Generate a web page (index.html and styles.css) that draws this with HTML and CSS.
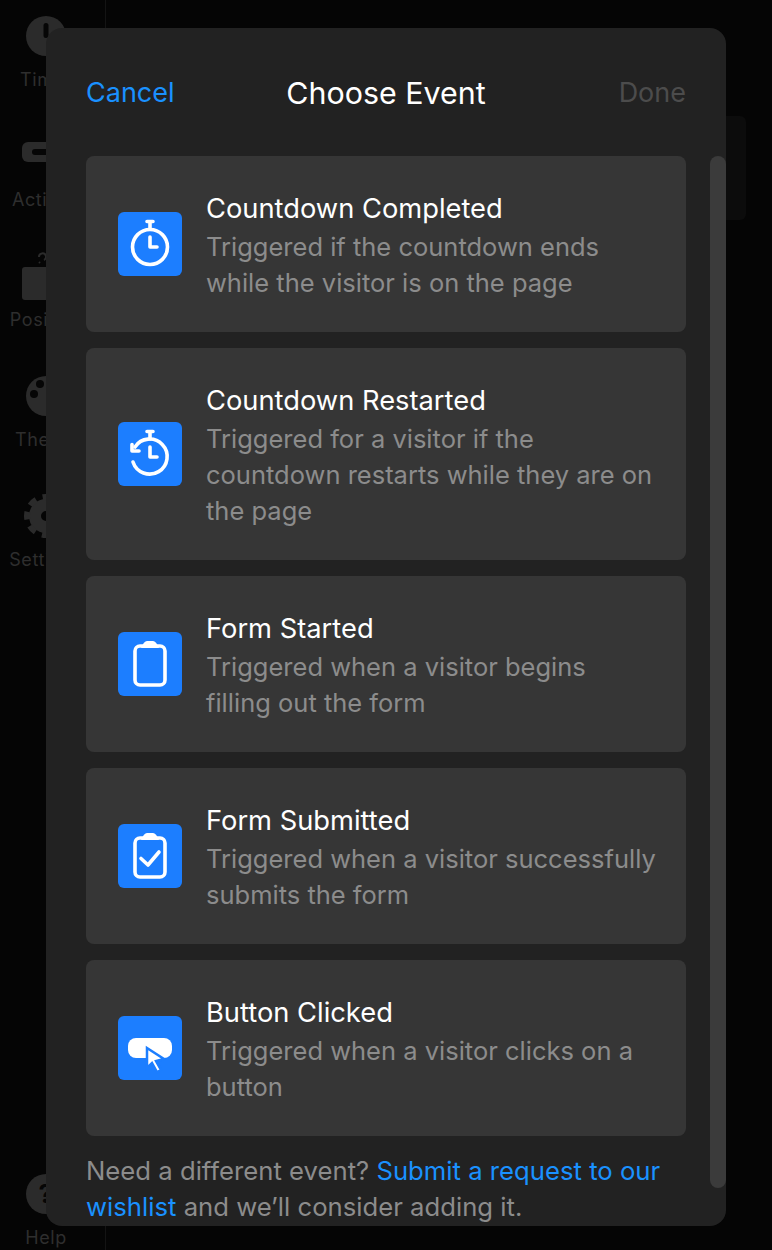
FILE: index.html
```html
<!DOCTYPE html>
<html lang="en">
<head>
  <meta charset="UTF-8" />
  <title>Choose Event</title>
  <link rel="stylesheet" href="styles.css">
</head>
<body>
  <!-- dimmed editor behind the modal -->
  <div class="editor">
    <nav class="sidebar">
      <div class="side-item">
        <svg class="side-icon" viewBox="0 0 40 40"><circle cx="20" cy="20" r="20" fill="#2b2b2b"/><rect x="17.500" y="7" width="5" height="15" rx="2.500" fill="#060606"/></svg>
        <span>Timer</span>
      </div>
      <div class="side-item">
        <svg class="side-icon" viewBox="0 0 40 40"><rect x="-4" y="6" width="48" height="20" rx="6" fill="#2b2b2b"/><rect x="6" y="13" width="24" height="6" rx="3" fill="#060606"/></svg>
        <span>Actions</span>
      </div>
      <div class="side-item">
        <svg class="side-icon" viewBox="0 0 40 40"><path d="M13 1a3.500 3.500 0 1 1 5 3M13 6l1 1" stroke="#2b2b2b" stroke-width="2" fill="none"/><rect x="-4" y="11" width="48" height="33" rx="3" fill="#2b2b2b"/></svg>
        <span>Position</span>
      </div>
      <div class="side-item">
        <svg class="side-icon" viewBox="0 0 40 40"><circle cx="20" cy="20" r="20" fill="#2b2b2b"/><circle cx="14" cy="8" r="4" fill="#060606"/><circle cx="8" cy="18" r="4" fill="#060606"/></svg>
        <span>Theme</span>
      </div>
      <div class="side-item">
        <svg class="side-icon" viewBox="0 0 40 40"><circle cx="20" cy="20" r="11" fill="none" stroke="#2b2b2b" stroke-width="12"/><circle cx="20" cy="20" r="19" fill="none" stroke="#2b2b2b" stroke-width="6" stroke-dasharray="8 6.920" stroke-dashoffset="4"/></svg>
        <span>Settings</span>
      </div>
      <div class="side-item side-help">
        <svg class="side-icon" viewBox="0 0 40 40"><circle cx="20" cy="20" r="20" fill="#2b2b2b"/><text x="20" y="29" text-anchor="middle" class="help-mark">?</text></svg>
        <span>Help</span>
      </div>
    </nav>
    <main class="canvas">
      <div class="canvas-panel"></div>
    </main>
  </div>

  <div class="modal">
    <div class="modal-head">
      <a class="cancel" href="#">Cancel</a>
      <h1>Choose Event</h1>
      <span class="done">Done</span>
    </div>

    <div class="events">
      <div class="event">
        <svg class="event-icon" viewBox="0 0 64 64">
          <rect width="64" height="64" rx="6" fill="#1c7eff"/>
          <g class="glyph">
            <circle cx="32" cy="35" r="17.500"/>
            <path d="M32 17V11M29 9.500H35M32 25V35H39"/>
          </g>
        </svg>
        <div class="event-text">
          <h2>Countdown Completed</h2>
          <p>Triggered if the countdown ends while the visitor is on the page</p>
        </div>
      </div>

      <div class="event">
        <svg class="event-icon" viewBox="0 0 64 64">
          <rect width="64" height="64" rx="6" fill="#1c7eff"/>
          <g class="glyph">
            <path d="M17 25A17.500 17.500 0 1 1 15 40"/>
            <path d="M14 22.500V29H21"/>
            <path d="M32 17V11M29 9.500H35M32 25V35H39"/>
          </g>
        </svg>
        <div class="event-text">
          <h2>Countdown Restarted</h2>
          <p>Triggered for a visitor if the countdown restarts while they are on the page</p>
        </div>
      </div>

      <div class="event">
        <svg class="event-icon" viewBox="0 0 64 64">
          <rect width="64" height="64" rx="6" fill="#1c7eff"/>
          <rect class="glyph" x="17" y="14" width="30" height="39" rx="5"/>
          <path class="clip" d="M23 16Q26 9 29 9H35Q38 9 41 16Z"/>
        </svg>
        <div class="event-text">
          <h2>Form Started</h2>
          <p>Triggered when a visitor begins filling out the form</p>
        </div>
      </div>

      <div class="event">
        <svg class="event-icon" viewBox="0 0 64 64">
          <rect width="64" height="64" rx="6" fill="#1c7eff"/>
          <rect class="glyph" x="17" y="14" width="30" height="39" rx="5"/>
          <path class="clip" d="M23 16Q26 9 29 9H35Q38 9 41 16Z"/>
          <path class="glyph" d="M23 34.500L30 41L41 28"/>
        </svg>
        <div class="event-text">
          <h2>Form Submitted</h2>
          <p>Triggered when a visitor successfully submits the form</p>
        </div>
      </div>

      <div class="event">
        <svg class="event-icon" viewBox="0 0 64 64">
          <rect width="64" height="64" rx="6" fill="#1c7eff"/>
          <rect class="clip" x="10" y="22" width="44" height="20" rx="8"/>
          <path class="cursor" d="M29 32L46 43L38 45L43 54L39 56L34 47L29 52Z"/>
        </svg>
        <div class="event-text">
          <h2>Button Clicked</h2>
          <p>Triggered when a visitor clicks on a button</p>
        </div>
      </div>

      <p class="wishlist">Need a different event? <a href="#">Submit a request to our wishlist</a> and we’ll consider adding it.</p>
    </div>

    <div class="scrollbar"></div>
  </div>
</body>
</html>
```

FILE: styles.css
```css
body {
  margin: 0;
  height: 1250px;
  overflow: hidden;
  background-color: #050505;
  font-family: Inter, 'Liberation Sans', sans-serif;
  color: white;
}

/* Editor behind the modal */
.editor {
  display: flex;
  height: 1250px;
}
.sidebar {
  display: flex;
  flex-direction: column;
  align-items: center;
  box-sizing: border-box;
  width: 92px;
  height: 100%;
  margin-right: 13px;
  padding-top: 16px;
  color: #2e2e2e;
  font-size: 18px;
  letter-spacing: 0.6px;
}
.side-item {
  display: flex;
  flex-direction: column;
  align-items: center;
  height: 120px;
}
.side-item span {
  margin-top: 12px;
  line-height: 24px;
}
.side-help {
  height: auto;
  margin-top: auto;
}
.side-icon {
  display: block;
  width: 40px;
  height: 40px;
  overflow: visible;
}
.help-mark {
  fill: #060606;
  font-size: 26px;
  font-weight: 700;
}
.canvas {
  flex: 1;
  border-left: 1px solid #141414;
  padding: 116px 26px 0 0;
}
.canvas-panel {
  height: 104px;
  background-color: #0c0c0c;
  border-radius: 6px;
}

/* Modal */
.modal {
  position: absolute;
  top: 28px;
  left: 46px;
  display: flex;
  flex-direction: column;
  box-sizing: border-box;
  width: 680px;
  height: 1198px;
  padding: 0 40px;
  overflow: hidden;
  background-color: #222222;
  border-radius: 16px;
}
.modal-head {
  display: grid;
  grid-template-columns: 1fr auto 1fr;
  align-items: center;
  flex: none;
  height: 128px;
  padding-top: 1px;
  box-sizing: border-box;
  font-size: 27px;
}
.modal-head h1 {
  margin: 0;
  font-size: 30.400px;
  font-weight: 400;
}
.cancel {
  color: #1a91ff;
  text-decoration: none;
}
.done {
  justify-self: end;
  color: #4c4c4c;
}

.events {
  display: flex;
  flex-direction: column;
  gap: 16px;
}
.event {
  display: flex;
  align-items: center;
  gap: 24px;
  padding: 30px 30px 30px 32px;
  background-color: #363636;
  border-radius: 8px;
}
.event-icon {
  flex: none;
  width: 64px;
  height: 64px;
}
.event-text {
  flex: 1;
  padding-top: 3px;
}
.event h2 {
  margin: 0;
  font-size: 27.300px;
  font-weight: 400;
  line-height: 40px;
}
.event p {
  margin: 0 0 1px;
  color: #8c8c8c;
  font-size: 25.500px;
  line-height: 36px;
}
.glyph {
  fill: none;
  stroke: white;
  stroke-width: 3.600;
  stroke-linecap: round;
  stroke-linejoin: round;
}
.clip {
  fill: white;
}
.cursor {
  fill: white;
  stroke: #1c7eff;
  stroke-width: 2.500;
}
.wishlist {
  margin: 1px 0 0;
  color: #8c8c8c;
  font-size: 25.700px;
  line-height: 36px;
}
.wishlist a {
  color: #1a91ff;
  text-decoration: none;
}
.scrollbar {
  position: absolute;
  top: 128px;
  right: 0;
  width: 16px;
  height: 1032px;
  background-color: #3b3b3b;
  border-radius: 8px;
}
```
